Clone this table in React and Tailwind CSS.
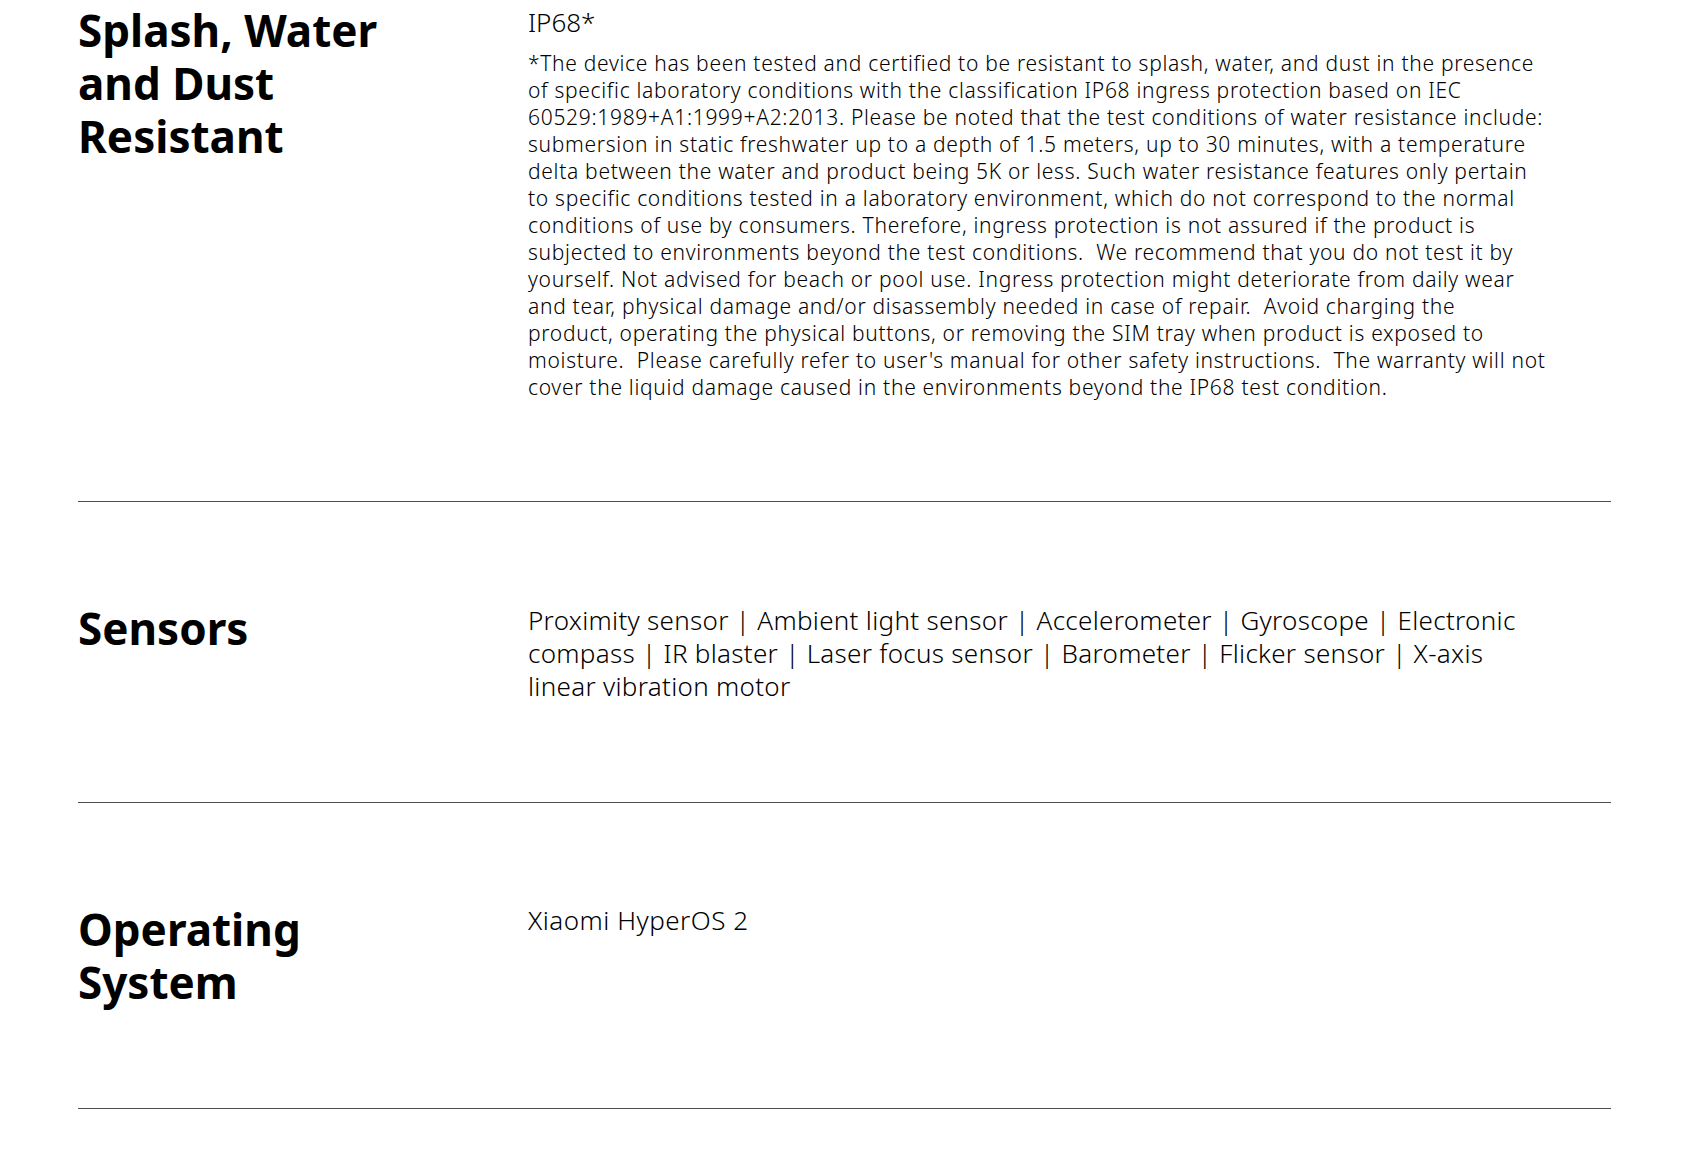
import React from "react";

const waterNote = [
  "*The device has been tested and certified to be resistant to splash, water, and dust in the presence",
  "of specific laboratory conditions with the classification IP68 ingress protection based on IEC",
  "60529:1989+A1:1999+A2:2013. Please be noted that the test conditions of water resistance include:",
  "submersion in static freshwater up to a depth of 1.5 meters, up to 30 minutes, with a temperature",
  "delta between the water and product being 5K or less. Such water resistance features only pertain",
  "to specific conditions tested in a laboratory environment, which do not correspond to the normal",
  "conditions of use by consumers. Therefore, ingress protection is not assured if the product is",
  "subjected to environments beyond the test conditions.  We recommend that you do not test it by",
  "yourself. Not advised for beach or pool use. Ingress protection might deteriorate from daily wear",
  "and tear, physical damage and/or disassembly needed in case of repair.  Avoid charging the",
  "product, operating the physical buttons, or removing the SIM tray when product is exposed to",
  "moisture.  Please carefully refer to user's manual for other safety instructions.  The warranty will not",
  "cover the liquid damage caused in the environments beyond the IP68 test condition.",
];

const sensors = [
  "Proximity sensor | Ambient light sensor | Accelerometer | Gyroscope | Electronic",
  "compass | IR blaster | Laser focus sensor | Barometer | Flicker sensor | X-axis",
  "linear vibration motor",
];

const Lines = ({ lines }) =>
  lines.map((line, i) => (
    <React.Fragment key={i}>
      {line}
      {i < lines.length - 1 && <br />}
    </React.Fragment>
  ));

// one spec row: heading on the left, value on the right
const SpecRow = ({ title, children, className = "" }) => (
  <div className={`flex border-b border-[#4d4d4d] ${className}`}>
    <div className="w-[450px] shrink-0">
      <h3 className="w-[340px] text-[44px] leading-[53px] font-bold text-black [font-family:'Noto_Sans',sans-serif]">
        {title}
      </h3>
    </div>
    <div className="w-[1080px] text-black [font-family:'Noto_Sans',sans-serif]">
      {children}
    </div>
  </div>
);

export default function App() {
  return (
    <div className="min-h-screen bg-white">
      <div className="pl-[78px] pr-[90px]">
        {/* Water resistance */}
        <SpecRow title="Splash, Water and Dust Resistant" className="pt-[4px] pb-[100px]">
          <p className="text-[26px] leading-[36px] font-light">IP68*</p>
          <p className="mt-[10px] text-[21px] leading-[27px] tracking-[0.7px] font-light whitespace-pre-wrap">
            <Lines lines={waterNote} />
          </p>
        </SpecRow>

        {/* Sensors */}
        <SpecRow title="Sensors" className="pt-[100px] pb-[99px]">
          <p className="mt-[2px] text-[26px] leading-[33px] tracking-[0.3px] font-light">
            <Lines lines={sensors} />
          </p>
        </SpecRow>

        {/* OS */}
        <SpecRow title="Operating System" className="pt-[100px] pb-[99px]">
          <p className="mt-[1px] text-[26px] leading-[33px] tracking-[0.5px] font-light">
            Xiaomi HyperOS 2
          </p>
        </SpecRow>

        <div className="h-[60px]" />
      </div>
    </div>
  );
}
